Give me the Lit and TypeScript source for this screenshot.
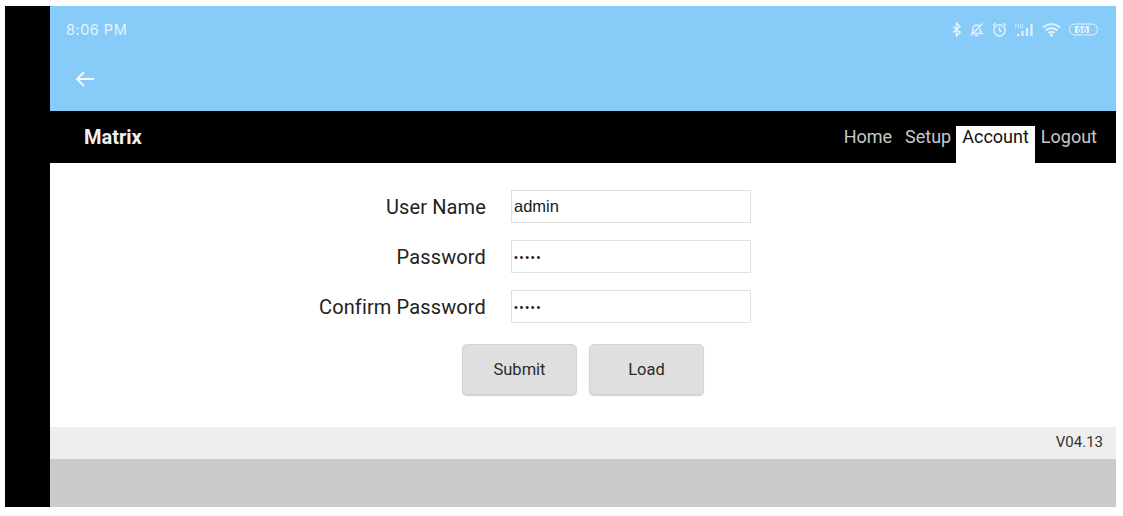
import { html, css, LitElement } from 'lit';
import { customElement } from 'lit/decorators.js';

@customElement('app-root')
export class AppRoot extends LitElement {
	static styles = css`
    :host {
      display: block;
      width: 1123px;
      height: 516px;
      background: #fff;
      font-family: Roboto, "Liberation Sans", sans-serif;
      overflow: hidden;
    }

    .screen {
      display: flex;
      margin: 6px 7px 9px 5px;
      height: 501px;
    }

    .bezel {
      width: 45px;
      flex: none;
      background: #000;
    }

    .app {
      flex: 1;
      display: flex;
      flex-direction: column;
      min-width: 0;
    }

    .status {
      height: 105px;
      flex: none;
      box-sizing: border-box;
      background: #87cbf8;
      padding: 14px 18px 0 16px;
      color: #e4f3fd;
    }

    .status-row {
      display: flex;
      justify-content: space-between;
      align-items: center;
      height: 18px;
      font-family: Inter, Roboto, sans-serif;
      font-size: 14.5px;
      letter-spacing: 0.5px;
    }

    .status-icons {
      display: flex;
      align-items: center;
      gap: 8px;
      filter: blur(0.3px);
    }

    .status-icons svg {
      display: block;
      fill: none;
      stroke: #e2f2fd;
      stroke-width: 1.5;
    }

    .back {
      display: block;
      margin: 31px 0 0 8px;
      fill: none;
      stroke: #f2f9fe;
      stroke-width: 2;
    }

    .nav {
      height: 52px;
      flex: none;
      display: flex;
      justify-content: space-between;
      background: #000;
      color: #fff;
    }

    .brand {
      padding: 15px 0 0 34px;
      font-size: 20px;
      font-weight: 700;
      line-height: 23px;
      color: #f0f0f0;
    }

    .links {
      display: flex;
      padding: 15px 13px 0 0;
      font-size: 18px;
      line-height: 21px;
    }

    .link {
      padding: 0 6px;
      color: #c8c8c8;
    }

    .link.active {
      background: #fff;
      color: #111;
    }

    .content {
      height: 264px;
      flex: none;
      box-sizing: border-box;
      background: #fff;
      padding-top: 27px;
    }

    .form {
      display: grid;
      grid-template-columns: 436px 240px;
      column-gap: 25px;
      row-gap: 17px;
      align-items: center;
    }

    label {
      text-align: right;
      font-size: 20px;
      letter-spacing: 0.13px;
      color: #222;
    }

    .field {
      box-sizing: border-box;
      width: 240px;
      height: 33px;
      padding: 0 2px;
      border: 1px solid #e0e0e0;
      background: #fff;
      font-family: "Liberation Sans", Arial, sans-serif;
      font-size: 16.5px;
      color: #1a1a1a;
      outline: none;
    }

    .field.secret {
      font-size: 11px;
      letter-spacing: 1.75px;
    }

    .actions {
      display: flex;
      gap: 12px;
      margin: 21px 0 0 412px;
    }

    .btn {
      box-sizing: border-box;
      width: 115px;
      height: 51px;
      border: 1px solid #d4d4d4;
      border-radius: 5px;
      background: #dfdfdf;
      box-shadow: 0 1px 1px #cfcfcf;
      font-family: Roboto, sans-serif;
      font-size: 16.5px;
      color: #2a2a2a;
    }

    .version {
      height: 32px;
      flex: none;
      box-sizing: border-box;
      padding: 6px 13px 0 0;
      background: #eeeeee;
      text-align: right;
      font-size: 15px;
      line-height: 19px;
      color: #333;
    }

    .bottom {
      flex: 1;
      background: #cbcbcb;
    }
  `;

	render() {
		return html`
      <div class="screen">
        <div class="bezel"></div>
        <div class="app">
          <div class="status">
            <div class="status-row">
              <span>8:06 PM</span>
              <div class="status-icons">
                <svg width="9" height="15" viewBox="0 0 9 15"><path d="M1 4.500l7 6-3.500 3.500V1L8 4.500l-7 6"/></svg>
                <svg width="15" height="15" viewBox="0 0 15 15"><path d="M2.500 11.500c1.500-1 1.500-3 1.500-5a3.500 3.500 0 0 1 6-2.500M11 6.500c0 2 .5 3.500 2 5H2.500M6 13.800h3M2 13.500L13.500 1.500"/></svg>
                <svg width="15" height="15" viewBox="0 0 15 15"><circle cx="7.500" cy="8.300" r="5.600"/><path d="M7.500 5v3.500l2.200 1M1 3.500L3.500 1.200M14 3.500L11.500 1.200"/></svg>
                <svg width="19" height="15" viewBox="0 0 19 15" style="stroke-width:2.200"><text x="0" y="5.500" font-size="6" fill="#e2f2fd" stroke="none" font-family="Roboto">HD</text><path d="M3 14v-2M7.500 14V9M12 14V6M16.500 14V2"/></svg>
                <svg width="19" height="15" viewBox="0 0 19 15" style="stroke-width:1.800"><path d="M1 5.500c5-4.500 12-4.500 17 0M3.500 8.500c3.500-3 8.500-3 12 0M6.300 11c2-1.500 4.400-1.500 6.400 0"/><circle cx="9.500" cy="13" r=".8"/></svg>
                <svg width="29" height="13" viewBox="0 0 29 13" style="stroke-width:1"><rect x=".5" y="1" width="28" height="11" rx="5.500"/><rect x="6" y="3" width="14" height="7" fill="#e2f2fd" stroke="none"/><text x="8" y="9.600" font-size="8.500" font-weight="700" fill="#87cbf8" stroke="none" font-family="Roboto">66</text></svg>
              </div>
            </div>
            <svg class="back" width="22" height="20" viewBox="0 0 22 20"><path d="M20 10H3M10 3l-7 7 7 7"/></svg>
          </div>
          <div class="nav">
            <div class="brand">Matrix</div>
            <div class="links">
              <div class="link">Home</div>
              <div class="link" style="padding:0 5px 0 7px">Setup</div>
              <div class="link active">Account</div>
              <div class="link">Logout</div>
            </div>
          </div>
          <div class="content">
            <div class="form">
              <label>User Name</label>
              <input class="field" value="admin" />
              <label>Password</label>
              <input class="field secret" type="password" value="admin" />
              <label>Confirm Password</label>
              <input class="field secret" type="password" value="admin" />
            </div>
            <div class="actions">
              <button class="btn">Submit</button>
              <button class="btn">Load</button>
            </div>
          </div>
          <div class="version">V04.13</div>
          <div class="bottom"></div>
        </div>
      </div>
    `;
	}
}
